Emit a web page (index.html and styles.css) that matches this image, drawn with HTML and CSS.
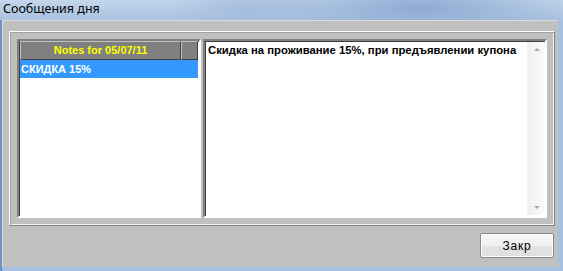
FILE: index.html
```html
<!DOCTYPE html>
<html lang="ru">
<head>
  <meta charset="UTF-8">
  <title>Сообщения дня</title>
  <link rel="stylesheet" href="styles.css">
</head>
<body>
  <div class="window">
    <div class="titlebar">Сообщения дня</div>
    <div class="client">
      <div class="panel">
        <div class="list">
          <div class="list-head">
            <div class="col-title">Notes for 05/07/11</div>
            <div class="col-extra"></div>
          </div>
          <div class="row selected">СКИДКА 15%</div>
        </div>
        <div class="memo">
          <div class="memo-text">Скидка на проживание 15%, при предъявлении купона</div>
          <div class="scrollbar">
            <span class="arrow up"></span>
            <span class="arrow down"></span>
          </div>
        </div>
      </div>
      <div class="footer">
        <button class="btn">Закр</button>
      </div>
    </div>
  </div>
</body>
</html>
```

FILE: styles.css
```css
body {
  margin: 0;
  background: #5d80b4;
}

.window {
  width: 563px;
  height: 271px;
  display: flex;
  flex-direction: column;
  background: linear-gradient(to right, #6f92c4 0, #6f92c4 2px, #a9c1e0 3px, #a9c1e0 100%);
  overflow: hidden;
}

/* заголовок окна */
.titlebar {
  height: 20px;
  padding-left: 3px;
  font-family: "Noto Sans", "Open Sans", sans-serif;
  font-size: 12.5px;
  line-height: 18px;
  color: #000;
  background: radial-gradient(ellipse 160px 30px at 420px 8px, #8fabd3 0%, rgba(143,171,211,0) 100%),
              radial-gradient(ellipse 90px 25px at 250px 10px, #a4bddd 0%, rgba(164,189,221,0) 100%),
              linear-gradient(to bottom, #c2d6ec 0%, #b4cbe6 60%, #a9c2e1 100%);
}

.client {
  margin: 0 5px 4px 2px;
  height: 247px;
  background: #c0c0c0;
  border-top: 1px solid #dcdcdc;
  border-left: 1px solid #dcdcdc;
  box-sizing: border-box;
  display: flex;
  flex-direction: column;
}

.panel {
  margin: 10px 0 0 6px;
  width: 546px;
  height: 195px;
  box-sizing: border-box;
  border: 1px solid;
  border-color: #fff #808080 #808080 #fff;
  box-shadow: inset 1px 1px #a0a0a0, inset -1px -1px #f4f4f4;
  padding: 7px;
  display: flex;
  gap: 2px;
}

.list {
  width: 184px;
  box-sizing: border-box;
  border: 2px solid;
  border-color: #808080 #fff #fff #808080;
  box-shadow: inset 1px 1px #404040;
  background: #fff;
  font-family: "Liberation Sans", Arial, sans-serif;
  font-size: 11px;
  font-weight: bold;
  padding: 0 1px;
}

.list-head {
  display: flex;
  height: 19px;
}

.col-title,
.col-extra {
  background: #808080;
  box-sizing: border-box;
  border: 1px solid;
  border-color: #c0c0c0 #404040 #404040 #c0c0c0;
}

.col-title {
  width: 162px;
  color: #ffff00;
  text-align: center;
  line-height: 17px;
}

.col-extra {
  width: 17px;
}

.row {
  height: 18px;
  line-height: 18px;
  padding-left: 1px;
}

.row.selected {
  background: #3399ff;
  color: #fff;
}

.memo {
  flex: 1;
  box-sizing: border-box;
  border: 2px solid;
  border-color: #808080 #fff #fff #808080;
  box-shadow: inset 1px 1px #404040;
  background: #fff;
  display: flex;
}

.memo-text {
  flex: 1;
  padding: 3px 0 0 3px;
  font-family: "Liberation Sans", Arial, sans-serif;
  font-size: 11.3px;
  font-weight: bold;
  color: #000;
}

.scrollbar {
  width: 17px;
  margin: 1px 0;
  background: linear-gradient(to right, #f0f0f0, #fafafa);
  border-left: 1px solid #f2f2f2;
  display: flex;
  flex-direction: column;
  justify-content: space-between;
  align-items: center;
  padding: 6px 0;
}

.arrow {
  width: 0;
  height: 0;
  border-left: 3px solid transparent;
  border-right: 3px solid transparent;
}

.arrow.up {
  border-bottom: 3px solid #a8a8a8;
}

.arrow.down {
  border-top: 3px solid #a8a8a8;
}

.footer {
  display: flex;
  justify-content: flex-end;
  padding: 7px 4px 0 0;
}

.btn {
  width: 74px;
  height: 25px;
  box-sizing: border-box;
  border: 1px solid #8a8a8a;
  border-radius: 2px;
  background: linear-gradient(to bottom, #f8f8f8 0%, #efefef 50%, #e3e3e3 51%, #dedede 100%);
  box-shadow: inset 0 0 0 1px #fcfcfc;
  font-family: "Liberation Sans", Arial, sans-serif;
  font-size: 12px;
  letter-spacing: 0.8px;
  color: #000;
  padding: 0;
}
```
